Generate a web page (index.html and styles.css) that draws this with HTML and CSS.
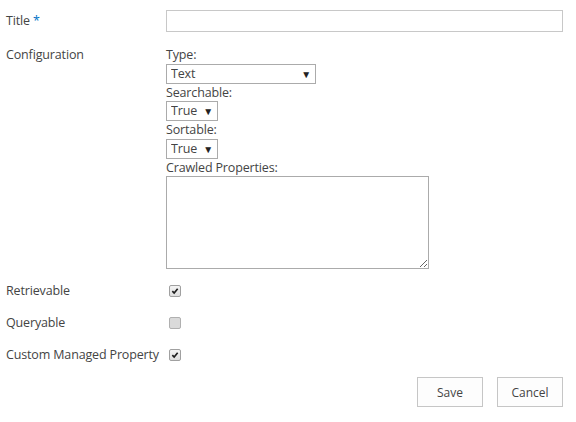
FILE: index.html
```html
<!DOCTYPE html>
<html>
<head>
    <meta charset="UTF-8">
    <link rel="stylesheet" href="styles.css">
</head>
<body>
<form class="property-form">
    <div class="row title-row">
        <label class="field-label">Title <span class="required">*</span></label>
        <div class="field">
            <input class="text-input" type="text">
        </div>
    </div>

    <div class="row config-row">
        <label class="field-label">Configuration</label>
        <div class="field config">
            <span class="sub-label">Type:</span>
            <span class="select-wrap wide">
                <select><option>Text</option></select>
            </span>
            <span class="sub-label">Searchable:</span>
            <span class="select-wrap">
                <select><option>True</option></select>
            </span>
            <span class="sub-label">Sortable:</span>
            <span class="select-wrap">
                <select><option>True</option></select>
            </span>
            <span class="sub-label">Crawled Properties:</span>
            <textarea class="crawled"></textarea>
        </div>
    </div>

    <div class="row check-row">
        <label class="field-label">Retrievable</label>
        <div class="field">
            <span class="checkbox checked">
                <svg viewBox="0 0 12 12" width="12" height="12"><path d="M2.8 6.2 L5 8.4 L9.2 3.4" fill="none" stroke="#1e1e1e" stroke-width="2"/></svg>
            </span>
        </div>
    </div>
    <div class="row check-row">
        <label class="field-label">Queryable</label>
        <div class="field">
            <span class="checkbox"></span>
        </div>
    </div>
    <div class="row check-row">
        <label class="field-label">Custom Managed Property</label>
        <div class="field">
            <span class="checkbox checked">
                <svg viewBox="0 0 12 12" width="12" height="12"><path d="M2.8 6.2 L5 8.4 L9.2 3.4" fill="none" stroke="#1e1e1e" stroke-width="2"/></svg>
            </span>
        </div>
    </div>

    <div class="actions">
        <button type="button">Save</button>
        <button type="button">Cancel</button>
    </div>
</form>
</body>
</html>
```

FILE: styles.css
```css
* {
    font-family: "Open Sans", "Noto Sans", sans-serif;
    box-sizing: border-box;
}

body {
    margin: 0;
    background: #fff;
    color: #444;
    font-size: 12.5px;
    letter-spacing: -0.15px;
}

.property-form {
    padding: 10px 13px 0 6px;
}

.row {
    display: grid;
    grid-template-columns: 160px 1fr;
}

.field-label {
    line-height: 18px;
    white-space: nowrap;
}

.required {
    color: #0072c6;
}

.title-row .field-label {
    line-height: 22px;
}

.text-input {
    display: block;
    width: 100%;
    height: 22px;
    border: 1px solid #c8c8c8;
    outline: none;
}

.config-row {
    margin-top: 14px;
}

.config {
    display: flex;
    flex-direction: column;
    align-items: flex-start;
}

.sub-label {
    line-height: 17.5px;
}

.select-wrap {
    position: relative;
    display: block;
    width: 52px;
}

.select-wrap.wide {
    width: 150px;
}

.select-wrap select {
    appearance: none;
    display: block;
    width: 100%;
    height: 20px;
    padding: 0 0 0 4px;
    border: 1px solid #ababab;
    border-radius: 0;
    background: #fff;
    color: #444;
    font-size: 12.5px;
    letter-spacing: -0.15px;
    line-height: 18px;
}

/* dropdown arrow drawn over the select's right edge */
.select-wrap::after {
    content: "\25BC";
    position: absolute;
    right: 5px;
    top: 3px;
    font-size: 10px;
    color: #222;
    pointer-events: none;
}

.crawled {
    display: block;
    width: 263px;
    height: 93px;
    border: 1px solid #ababab;
    resize: both;
}

.check-row {
    margin-top: 14px;
}

.config-row + .check-row {
    margin-top: 13px;
}

.check-row .field {
    display: flex;
    align-items: center;
    padding-left: 3px;
}

.checkbox {
    display: block;
    width: 12px;
    height: 12px;
    border: 1px solid #b0b0b0;
    border-radius: 2px;
    background: #dadada;
}

.checkbox.checked {
    background: linear-gradient(#f4f4f4, #dedede);
    border-color: #a0a0a0;
}

.checkbox svg {
    display: block;
    width: 10px;
    height: 10px;
}

.actions {
    display: flex;
    justify-content: flex-end;
    gap: 14px;
    margin-top: 13px;
}

.actions button {
    width: 66px;
    height: 30px;
    border: 1px solid #c6c6c6;
    background: #fdfdfd;
    color: #444;
    font-size: 12px;
}
```
